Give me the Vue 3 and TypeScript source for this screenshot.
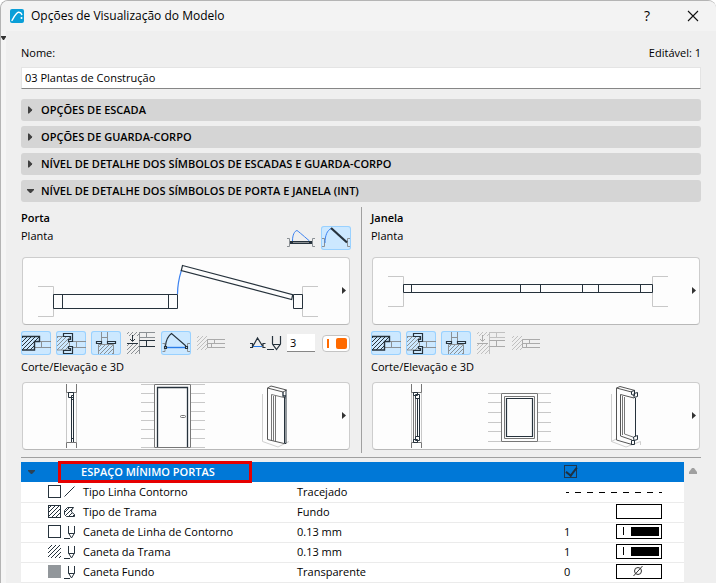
<script setup lang="ts">
import { ref } from 'vue'

interface Row {
  icon: 'line' | 'fill' | 'pen' | 'hatch' | 'solid'
  label: string
  value: string
  pen?: string
  swatch: 'dash' | 'empty' | 'pen' | 'none'
}

const sections = [
  { title: 'OPÇÕES DE ESCADA', open: false },
  { title: 'OPÇÕES DE GUARDA-CORPO', open: false },
  { title: 'NÍVEL DE DETALHE DOS SÍMBOLOS DE ESCADAS E GUARDA-CORPO', open: false },
  { title: 'NÍVEL DE DETALHE DOS SÍMBOLOS DE PORTA E JANELA (INT)', open: true },
]

const rows: Row[] = [
  { icon: 'line', label: 'Tipo Linha Contorno', value: 'Tracejado', swatch: 'dash' },
  { icon: 'fill', label: 'Tipo de Trama', value: 'Fundo', swatch: 'empty' },
  { icon: 'pen', label: 'Caneta de Linha de Contorno', value: '0.13 mm', pen: '1', swatch: 'pen' },
  { icon: 'hatch', label: 'Caneta da Trama', value: '0.13 mm', pen: '1', swatch: 'pen' },
  { icon: 'solid', label: 'Caneta Fundo', value: 'Transparente', pen: '0', swatch: 'none' },
]

const name = ref('03 Plantas de Construção')
const penNumber = ref('3')
const minSpace = ref(true)
</script>

<template>
  <main class="dialog">
    <svg class="defs" width="0" height="0" aria-hidden="true">
      <defs>
        <pattern id="hatch-dark" width="4" height="4" patternUnits="userSpaceOnUse">
          <path d="M-1 1L1 -1M0 4L4 0M3 5L5 3" stroke="#26323c" stroke-width="1" />
        </pattern>
        <pattern id="hatch-grey" width="4" height="4" patternUnits="userSpaceOnUse">
          <path d="M-1 1L1 -1M0 4L4 0M3 5L5 3" stroke="#8b9094" stroke-width="1" />
        </pattern>
        <pattern id="hatch-light" width="4" height="4" patternUnits="userSpaceOnUse">
          <path d="M-1 1L1 -1M0 4L4 0M3 5L5 3" stroke="#c0c0c0" stroke-width="1" />
        </pattern>
        <g id="ico-wall" fill="none">
          <path d="M18.5 10.5H30M14 16.5H30M20.5 10.5V16.5" stroke="#8b9094" />
          <path d="M1 5.5H18.5V10.5H13.5V19H1" fill="url(#hatch-dark)" stroke="#26323c" stroke-width="1.4" />
        </g>
        <g id="ico-frame" fill="none">
          <path d="M1 5.5H13.5V19H1" fill="url(#hatch-grey)" stroke="#8b9094" />
          <path d="M16 10.5H30M16 16.5H30M20.5 10.5V16.5" stroke="#8b9094" />
          <path d="M7.5 2.5H16.5V10.5H12.5V8.500H14.500V5.5H7.5ZM7.5 22.5H16.5V15.5H12.5V17.500H14.500V19.5H7.5Z" fill="#cce8ff" stroke="#26323c" stroke-width="1.2" />
        </g>
        <g id="ico-sill" fill="none">
          <path d="M10.5 1V10M16.5 1V10M10.5 6.5H16.5" stroke="#8b9094" />
          <path d="M7.5 23V13.5H22.5V23" fill="url(#hatch-grey)" stroke="#8b9094" />
          <path d="M5.5 10.5H10.5V12.5H5.5ZM16.5 10.5H24.5V12.5H16.5Z" fill="#cce8ff" stroke="#26323c" stroke-width="1.2" />
        </g>
        <g id="pen" fill="none" stroke="#26323c">
          <path d="M4.5 1V8L7.5 13L10.5 8V1M4.5 8.5H10.5M0 13.5H6" />
        </g>
      </defs>
    </svg>

    <header class="titlebar">
      <svg class="logo" width="14" height="14" viewBox="0 0 14 14" aria-hidden="true">
        <rect width="14" height="14" rx="2" fill="#0a9fd8" />
        <path d="M2 11.500C3.500 9 6 3.500 8.500 3.200Q11 3 11.800 5.500" fill="none" stroke="#fff" stroke-width="1.400" stroke-linecap="round" />
        <circle cx="11.500" cy="9" r="1" fill="#fff" />
      </svg>
      <h1>Opções de Visualização do Modelo</h1>
      <button class="win-btn" aria-label="Ajuda">?</button>
      <button class="win-btn" aria-label="Fechar">
        <svg width="12" height="12" viewBox="0 0 12 12"><path d="M1 1L11 11M11 1L1 11" stroke="#111" stroke-width="1.1" /></svg>
      </button>
    </header>

    <div class="frame">
      <div class="gutter">
        <svg width="5" height="5" viewBox="0 0 5 5" aria-hidden="true"><path d="M0 0H5V1L3 4H2L0 1Z" fill="#333" /></svg>
      </div>

      <div class="content">
        <div class="name-row">
          <label for="name">Nome:</label>
          <span>Editável: 1</span>
        </div>
        <input id="name" v-model="name" class="name-input" type="text" />

        <div class="sections">
          <button v-for="s in sections" :key="s.title" class="section" :aria-expanded="s.open">
            <svg width="7" height="8" viewBox="0 0 7 8" aria-hidden="true">
              <path v-if="s.open" d="M0 2H7V3L4 6H3L0 3Z" fill="#404040" />
              <path v-else d="M1 0.500H2L5 3.500V4.500L2 7.500H1Z" fill="#404040" />
            </svg>
            {{ s.title }}
          </button>
        </div>

        <div class="symbols">
          <section class="symbol">
            <div class="symbol-head">
              <div class="symbol-title">
                <h2>Porta</h2>
                <p>Planta</p>
              </div>
              <button class="tool" aria-label="Porta fechada">
                <svg viewBox="0 0 30 24">
                  <path d="M1 12.500H3.500V20.500H1M29 12.500H26.500V20.500H29" fill="none" stroke="#8b9094" />
                  <path d="M6.500 15C6.500 9 8.500 5 11 4.500Q12 5 23.500 15" fill="none" stroke="#3c82f0" />
                  <path d="M4.500 15.500H25.500V17.500H4.500Z" fill="#8b9094" stroke="#26323c" />
                  <path d="M4 15V18H7V15ZM23 15V18H26V15Z" fill="#26323c" />
                </svg>
              </button>
              <button class="tool on" aria-label="Porta aberta" aria-pressed="true">
                <svg viewBox="0 0 30 24">
                  <path d="M1 12.500H3.500V20.500H1M29 12.500H26.500V20.500H29" fill="none" stroke="#8b9094" />
                  <path d="M4 17C4 10 6 4 10.500 2.500" fill="none" stroke="#3c82f0" />
                  <path d="M10 2L26 16.500" stroke="#26323c" stroke-width="2.200" />
                </svg>
              </button>
            </div>

            <button class="preview" aria-label="Planta da porta">
              <svg viewBox="23 258 326 66">
                <g fill="none" stroke="#26323c">
                  <path d="M38 286.500H53.500V316.500H38M318 286.500H302.500V316.500H318" stroke="#c8c8c8" />
                  <path d="M177.500 294C177.500 286 179 278 181.500 270" stroke="#3c82f0" stroke-width="1.200" />
                  <path d="M53.500 294.500H177.500V308.500H53.500ZM62.500 294.500V308.500M168.500 294.500V308.500M293.500 294.500H302.500V308.500H293.500Z" />
                  <path d="M182.500 265.500L292.700 294.700L291.700 299.500L181.300 270.500Z" stroke-width="1.200" />
                </g>
                <path d="M342 287L346 290.500L342 294Z" fill="#333" />
              </svg>
            </button>

            <div class="tools">
              <button class="tool on" aria-label="Parede" aria-pressed="true"><svg viewBox="0 0 30 24"><use href="#ico-wall" /></svg></button>
              <button class="tool on" aria-label="Aro" aria-pressed="true"><svg viewBox="0 0 30 24"><use href="#ico-frame" /></svg></button>
              <button class="tool on" aria-label="Soleira" aria-pressed="true"><svg viewBox="0 0 30 24"><use href="#ico-sill" /></svg></button>
              <button class="tool" aria-label="Recuo">
                <svg viewBox="0 0 30 24">
                  <path d="M1 1H13.500V5H1ZM1 13H13.500V23H1Z" fill="url(#hatch-grey)" />
                  <path d="M13.500 1V23M13.500 1.500H29M13.500 6.500H29M20.500 1.500V6.500" fill="none" stroke="#8b9094" />
                  <path d="M13.500 9.500H29M13.500 15.500H29M20.500 9.500V15.500M6.500 4V10M4 8L6.500 10.500L9 8M1 12.500H12" fill="none" stroke="#26323c" />
                </svg>
              </button>
              <button class="tool on" aria-label="Abertura" aria-pressed="true">
                <svg viewBox="0 0 30 24">
                  <path d="M1.500 12.500H4V20.500H1.500M29 12.500H26.500V20.500H29" fill="none" stroke="#8b9094" />
                  <path d="M5 16.500H25" stroke="#2a7de8" stroke-width="1.400" />
                  <path d="M4.500 15C5 9 7 5 10.500 2.500L25 15M3.500 15.500H5.500V17.500H3.500ZM24.500 15.500H26.500V17.500H24.500Z" fill="none" stroke="#26323c" stroke-width="1.100" />
                </svg>
              </button>
              <button class="tool" aria-label="Guarnição" disabled>
                <svg viewBox="0 0 30 24">
                  <path d="M1 5H12V19H1Z" fill="url(#hatch-light)" />
                  <path d="M29 8.500H11.500V16.500H29M11.500 12.500H29M18.500 8.500V12.500M15.500 12.500V16.500" fill="none" stroke="#aaa" />
                </svg>
              </button>
              <label class="pen-field">
                <svg width="32" height="18" viewBox="0 0 32 18" role="img" aria-label="Caneta">
                  <path d="M3 12.500H12" stroke="#2a7de8" />
                  <path d="M0 9.500H2.500V13.500H0M15.500 9.500H13V13.500H15.500M3 12L7.500 4L12.500 12" fill="none" stroke="#26323c" stroke-width="1.200" />
                  <path d="M22.500 2V10L26.500 15.500L30.500 10V2M22.500 10.500H30.500M17 15.500H24" fill="none" stroke="#26323c" stroke-width="1.200" />
                </svg>
                <input v-model="penNumber" type="text" />
              </label>
              <button class="color" aria-label="Cor da caneta"><i class="bar"></i><i class="chip"></i></button>
            </div>

            <p class="caption">Corte/Elevação e 3D</p>

            <button class="preview" aria-label="Corte, elevação e 3D da porta">
              <svg viewBox="23 383 326 66">
                <g fill="none" stroke="#26323c">
                  <path d="M66.500 392V442M76.500 392V442" stroke="#c8c8c8" />
                  <path d="M66.500 384V392.500H76.500V384M66.500 448V442.500H76.500V448" stroke="#777" />
                  <path d="M68.500 392.500H73.500V397.500H68.500ZM71.500 395.500H73.500V442M71.500 395.500V442M71.500 399.500H73.500M71.500 438.500H73.500" />
                  <path d="M141 384.500H154M141 393.500H154M141 402.500H154M141 411.500H154M141 420.500H154M141 429.500H154M141 438.500H154M141 447.500H154M191 384.500H205M191 393.500H205M191 402.500H205M191 411.500H205M191 420.500H205M191 429.500H205M191 438.500H205M191 447.500H205" stroke="#c8c8c8" />
                  <path d="M154.500 384.500H190.500V447.500H154.500Z" stroke="#777" />
                  <path d="M157.500 447V387.500H187.500V447" stroke-width="1.300" />
                  <rect x="180.500" y="415.500" width="5" height="2" rx="1" stroke="#777" />
                  <path d="M262.500 394V441.500L278 447L289 441.500" stroke="#d0d0d0" />
                  <path d="M267.500 388V439.500L284 443.500M267.500 388L271 386L286.500 390M267.500 388L283 392L286.500 390" stroke="#555" />
                  <path d="M271.500 440V394.500L286 398M273.500 441V396M275.500 441V396" stroke="#777" />
                  <path d="M283 392V396H286" stroke-width="1.300" />
                  <path d="M286 390V443.500H284.500V397" />
                </g>
                <path d="M342 412L346 415.500L342 419Z" fill="#333" />
              </svg>
            </button>
          </section>

          <div class="divider"></div>

          <section class="symbol">
            <div class="symbol-head">
              <div class="symbol-title">
                <h2>Janela</h2>
                <p>Planta</p>
              </div>
            </div>

            <button class="preview" aria-label="Planta da janela">
              <svg viewBox="373 258 326 66">
                <g fill="none" stroke="#26323c">
                  <path d="M388 276.500H403.500V306.500H388M668 276.500H652.500V306.500H668" stroke="#c8c8c8" />
                  <path d="M403.500 284.500H652.500V292.500H403.500ZM411.500 284V292M520.500 284V292M540.500 284V292M582.500 284V292M598.500 284V292M640.500 284V292" />
                </g>
                <path d="M692 287L696 290.500L692 294Z" fill="#333" />
              </svg>
            </button>

            <div class="tools">
              <button class="tool on" aria-label="Parede" aria-pressed="true"><svg viewBox="0 0 30 24"><use href="#ico-wall" /></svg></button>
              <button class="tool on" aria-label="Aro" aria-pressed="true"><svg viewBox="0 0 30 24"><use href="#ico-frame" /></svg></button>
              <button class="tool on" aria-label="Peitoril" aria-pressed="true"><svg viewBox="0 0 30 24"><use href="#ico-sill" /></svg></button>
              <button class="tool" aria-label="Recuo" disabled>
                <svg viewBox="0 0 30 24">
                  <path d="M1 1H13.500V5H1ZM1 13H13.500V23H1Z" fill="url(#hatch-light)" />
                  <path d="M13.500 1V23M13.500 1.500H29M13.500 6.500H29M20.500 1.500V6.500" fill="none" stroke="#c0c0c0" />
                  <path d="M13.500 9.500H29M13.500 15.500H29M20.500 9.500V15.500M6.500 4V10M4 8L6.500 10.500L9 8M1 12.500H12" fill="none" stroke="#aaa" />
                </svg>
              </button>
              <button class="tool" aria-label="Guarnição" disabled>
                <svg viewBox="0 0 30 24">
                  <path d="M1 5H12V19H1Z" fill="url(#hatch-light)" />
                  <path d="M29 8.500H11.500V16.500H29M11.500 12.500H29M18.500 8.500V12.500M15.500 12.500V16.500" fill="none" stroke="#aaa" />
                </svg>
              </button>
            </div>

            <p class="caption">Corte/Elevação e 3D</p>

            <button class="preview" aria-label="Corte, elevação e 3D da janela">
              <svg viewBox="373 383 326 66">
                <g fill="none" stroke="#26323c">
                  <path d="M411.500 392V442M421.500 392V442" stroke="#c8c8c8" />
                  <path d="M411.500 384V392.500H421.500V384M411.500 448V442.500H421.500V448M413.500 392V442M415.500 396V438" stroke="#777" />
                  <path d="M413.500 392.500H417.500V395.500H413.500ZM415.500 394.500H419.500V398.500H415.500ZM417.500 398V437M419.500 398V437M415.500 436.500H419.500V440.500H415.500ZM413.500 439.500H417.500V442.500H413.500Z" />
                  <path d="M488 393.500H501M488 402.500H501M488 412.500H501M488 422.500H501M488 431.500H501M488 441.500H501M538 393.500H551M538 402.500H551M538 412.500H551M538 422.500H551M538 431.500H551M538 441.500H551" stroke="#c8c8c8" />
                  <path d="M501.500 393.500H537.500V441.500H501.500ZM504.500 396.500H534.500V438.500H504.500Z" stroke="#777" />
                  <path d="M506.500 398.500H532.500V436.500H506.500Z" stroke-width="1.200" />
                  <path d="M611.500 394V441.500L626 447L640.500 441.500V445M611.500 441.500L616 439" stroke="#d0d0d0" />
                  <path d="M616.500 388V440L632 444.500M616.500 388L620 386.500L635 390.500M616.500 388L631.500 392M620.500 436V394.500L634 398M620.500 436L632 440" stroke="#555" />
                  <path d="M622.500 435V396M624.500 434V397M624.500 434L633 437" stroke="#777" />
                  <path d="M635.500 398V436" />
                  <path d="M631.500 391.500L634.500 390.500V395.500L631.500 394.500ZM634 393.500L637.500 392.500V396.500L634 397.500ZM633.500 437L637.500 435.500V439.500L634 440.500ZM631.500 440.500H634.500V444.500H631.500Z" />
                </g>
                <path d="M692 412L696 415.500L692 419Z" fill="#333" />
              </svg>
            </button>
          </section>
        </div>

        <div class="list">
          <table>
            <colgroup>
              <col class="c-icon" />
              <col class="c-label" />
              <col class="c-value" />
              <col class="c-pen" />
              <col class="c-swatch" />
            </colgroup>
            <thead>
              <tr>
                <th scope="colgroup" colspan="3">
                  <div class="group">
                    <svg width="7" height="4" viewBox="0 0 7 4" aria-hidden="true"><path d="M0 0H7V1L4 4H3L0 1Z" fill="#2b4256" /></svg>
                    <span id="group-title">ESPAÇO MÍNIMO PORTAS</span>
                    <i class="mark"></i>
                  </div>
                </th>
                <td colspan="2"><input v-model="minSpace" type="checkbox" aria-labelledby="group-title" /></td>
              </tr>
            </thead>
            <tbody>
              <tr v-for="r in rows" :key="r.label">
                <td class="icons">
                  <svg width="28" height="14" viewBox="0 0 28 14" aria-hidden="true">
                    <rect v-if="r.icon === 'line' || r.icon === 'pen'" x="0.500" y="0.500" width="12" height="12" fill="#fff" stroke="#26323c" />
                    <rect v-if="r.icon === 'fill'" x="0.500" y="0.500" width="12" height="12" fill="url(#hatch-dark)" stroke="#26323c" />
                    <rect v-if="r.icon === 'hatch'" width="13" height="13" fill="url(#hatch-dark)" />
                    <rect v-if="r.icon === 'solid'" width="13" height="13" fill="#92979b" />
                    <path v-if="r.icon === 'line'" d="M16.500 11.500L26.500 1.500" stroke="#26323c" />
                    <path v-else-if="r.icon === 'fill'" d="M16.500 5.500L19.500 2.500H25.500Q23 5 23.500 7L26.500 9.500V11.500H18.500L16.500 9.500Z" fill="url(#hatch-dark)" stroke="#26323c" />
                    <use v-else href="#pen" x="16" />
                  </svg>
                </td>
                <td>{{ r.label }}</td>
                <td>{{ r.value }}</td>
                <td v-if="r.swatch === 'dash'" colspan="2">
                  <svg class="dash" width="96" height="3" viewBox="0 0 96 3" role="img" aria-label="Linha tracejada"><path d="M0 1.500H96" stroke="#000" stroke-dasharray="6 6" stroke-dashoffset="3" /></svg>
                </td>
                <template v-else>
                  <td>{{ r.pen }}</td>
                  <td>
                    <button class="swatch" :aria-label="'Escolher ' + r.label">
                      <svg v-if="r.swatch === 'pen'" width="44" height="13" viewBox="0 0 44 13"><path d="M6.500 2V10" stroke="#000" /><rect x="14" y="2" width="28" height="9" /></svg>
                      <svg v-if="r.swatch === 'none'" width="44" height="13" viewBox="0 0 44 13"><circle cx="21" cy="6" r="3.500" fill="none" stroke="#333" /><path d="M16.500 11L25.500 1" stroke="#333" /></svg>
                    </button>
                  </td>
                </template>
              </tr>
            </tbody>
          </table>
          <div class="scroll">
            <svg width="8" height="6" viewBox="0 0 8 6" aria-hidden="true"><path d="M3 0H5L8 4V6H0V4Z" fill="#a0a0a0" /></svg>
          </div>
        </div>
      </div>
    </div>
  </main>
</template>

<style>
body {
  background: #fff;
}
</style>

<style scoped>
* {
  box-sizing: border-box;
}

.dialog {
  min-height: 100vh;
  border-top: 1px solid #b4b4b4;
  border-left: 1px solid #b4b4b4;
  border-radius: 8px 8px 0 0;
  background: #efefef;
  color: #000;
  font: 11px/18px "Open Sans", "Noto Sans", sans-serif;
  overflow: hidden;
}

.defs {
  position: absolute;
}

button,
input {
  margin: 0;
  padding: 0;
  border: 0;
  background: none;
  color: inherit;
  font: inherit;
}

svg {
  display: block;
}

h1,
h2,
p {
  margin: 0;
  font-size: inherit;
}

h2,
th {
  font-weight: 600;
}

.titlebar {
  display: flex;
  align-items: center;
  height: 30px;
  padding-left: 9px;
  background: #f3f3f3;
}

.titlebar h1 {
  flex: 1;
  margin-left: 7px;
  font-size: 12px;
  font-weight: 400;
}

.win-btn {
  display: grid;
  place-items: center;
  width: 46px;
  height: 28px;
  font-size: 14px;
}

.frame {
  display: flex;
  min-height: calc(100vh - 31px);
}

.gutter {
  width: 5px;
  padding-top: 5px;
  background: #f5f5f5;
}

.content {
  flex: 1;
  min-width: 0;
  padding: 13px 15px 0;
}

.name-row {
  display: flex;
  justify-content: space-between;
}

.name-input {
  display: block;
  width: 100%;
  height: 22px;
  margin-top: 5px;
  padding: 0 3px 2px;
  border: 1px solid #e4e4e4;
  border-bottom-color: #868686;
  background: #fff;
}

.sections {
  display: grid;
  gap: 5px;
  margin-top: 10px;
}

.section {
  display: flex;
  align-items: center;
  gap: 7px;
  height: 22px;
  padding: 0 6px;
  border-radius: 3px;
  background: #d5d5d5;
  font-weight: 600;
  text-align: left;
}

.symbols {
  display: grid;
  grid-template-columns: minmax(0, 1fr) 20px minmax(0, 1fr);
  margin-top: 5px;
}

.divider {
  margin-left: 10px;
  border-left: 1px solid #a0a0a0;
}

.symbol {
  display: flex;
  flex-direction: column;
  padding-bottom: 3px;
}

.symbol-head {
  display: flex;
  align-items: flex-end;
  gap: 5px;
  height: 50px;
  padding-bottom: 7px;
}

.symbol-title {
  flex: 1;
  align-self: flex-start;
  padding-top: 2px;
}

.preview {
  display: block;
  height: 68px;
  margin: 0 1px;
  border: 1px solid #cdcdcd;
  border-bottom-color: #b8b8b8;
  border-radius: 4px;
  background: #fdfdfd;
}

.preview svg {
  width: 100%;
  height: 66px;
}

.tools {
  display: flex;
  gap: 5px;
  margin-top: 6px;
}

.tool {
  width: 30px;
  height: 24px;
  border-radius: 3px;
}

.tool.on {
  background: #cce8ff;
  box-shadow: inset 0 0 0 1px #99d1ff;
}

.pen-field {
  display: flex;
  align-items: center;
  gap: 5px;
  margin-left: auto;
}

.pen-field input {
  width: 28px;
  height: 18px;
  padding-left: 3px;
  border-bottom: 1px solid #868686;
  background: #fff;
}

.color {
  display: flex;
  align-items: center;
  justify-content: space-between;
  width: 28px;
  height: 17px;
  align-self: center;
  margin: 0 1px 0 2px;
  padding: 0 2px 0 4px;
  border: 1px solid #c4c4c4;
  border-radius: 4px;
  background: #fff;
}

.bar {
  width: 2px;
  height: 9px;
  background: #ff6a00;
}

.chip {
  width: 11px;
  height: 11px;
  border-radius: 2px;
  background: #ff6a00;
}

.caption {
  margin: 3px 0 6px;
}

.list {
  display: flex;
  margin-top: 4px;
  padding-top: 4px;
  border-top: 1px solid #a0a0a0;
}

table {
  flex: 1;
  table-layout: fixed;
  border-collapse: collapse;
  background: #fff;
}

.c-icon {
  width: 62px;
}

.c-label {
  width: 214px;
}

.c-pen {
  width: 52px;
}

.c-swatch {
  width: 68px;
}

th,
td {
  height: 20px;
  padding: 0;
  line-height: 18px;
  text-align: left;
  white-space: nowrap;
}

thead th,
thead td {
  border-bottom: 1px solid #fff;
  background: #0078d7;
}

tbody tr {
  border-bottom: 1px solid #ebebeb;
}

.group {
  position: relative;
  display: flex;
  align-items: center;
  gap: 46px;
  padding-left: 7px;
  color: #fff;
}

.mark {
  position: absolute;
  left: 37px;
  top: -2px;
  width: 194px;
  height: 22px;
  border: 3px solid #e60000;
}

input[type='checkbox'] {
  display: block;
  appearance: none;
  width: 13px;
  height: 13px;
  border: 1px solid #1f3850;
}

input[type='checkbox']:checked::after {
  content: '';
  display: block;
  width: 5px;
  height: 9px;
  margin: -1px 0 0 3px;
  border: solid #1f3040;
  border-width: 0 2px 2px 0;
  transform: rotate(38deg);
}

.icons {
  padding-left: 27px;
}

.dash {
  margin-left: 2px;
}

.swatch {
  display: block;
  width: 46px;
  height: 15px;
  margin-bottom: 2px;
  border: 1px solid #000;
  background: #fff;
}

.scroll {
  width: 17px;
  padding: 6px 0 0 5px;
}
</style>
